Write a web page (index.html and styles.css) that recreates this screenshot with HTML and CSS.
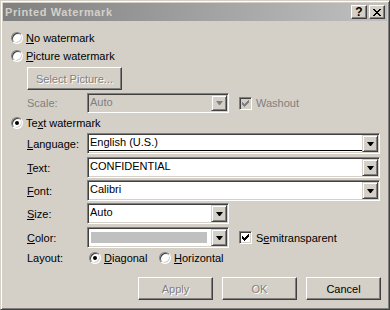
FILE: index.html
```html
<!DOCTYPE html>
<html lang="en">
  <head>
    <meta charset="UTF-8" />
    <title>Printed Watermark</title>
    <link rel="stylesheet" href="styles.css">
  </head>
  <body>
    <div class="window">
      <div class="titlebar">
        <span class="title">Printed Watermark</span>
        <div class="cap-btns">
          <span class="cap-btn">?</span>
          <span class="cap-btn">
            <svg width="8" height="7" viewBox="0 0 8 7" shape-rendering="crispEdges">
              <path d="M0 0h2v1h-2zM6 0h2v1h-2zM1 1h2v1h-2zM5 1h2v1h-2zM2 2h4v1h-4zM3 3h2v1h-2zM2 4h4v1h-4zM1 5h2v1h-2zM5 5h2v1h-2zM0 6h2v1h-2zM6 6h2v1h-2z" fill="#000"/>
            </svg>
          </span>
        </div>
      </div>

      <div class="content">
        <div class="radio-row row-none">
          <span class="radio"></span><span><u>N</u>o watermark</span>
        </div>
        <div class="radio-row row-picture">
          <span class="radio"></span><span><u>P</u>icture watermark</span>
        </div>

        <div class="sub">
          <button class="btn select-btn" disabled>Select Picture...</button>

          <div class="field row-scale">
            <span class="label grey">Scale:</span>
            <div class="combo short off">
              <span class="combo-text">Auto</span><span class="drop"></span>
            </div>
            <span class="check off">
              <svg width="7" height="7" viewBox="0 0 7 7" shape-rendering="crispEdges"><path d="M6 0h1v3h-1zM5 1h1v3h-1zM4 2h1v3h-1zM3 3h1v3h-1zM2 4h1v3h-1zM1 3h1v3h-1zM0 2h1v3h-1z"/></svg>
            </span>
            <span class="grey">Washout</span>
          </div>
        </div>

        <div class="radio-row row-text">
          <span class="radio on"></span><span>Te<u>x</u>t watermark</span>
        </div>

        <div class="sub">
          <div class="field row-lang">
            <span class="label"><u>L</u>anguage:</span>
            <div class="combo long">
              <span class="combo-text focus">English (U.S.)</span><span class="drop"></span>
            </div>
          </div>
          <div class="field row-txt">
            <span class="label"><u>T</u>ext:</span>
            <div class="combo long">
              <span class="combo-text">CONFIDENTIAL</span><span class="drop"></span>
            </div>
          </div>
          <div class="field row-font">
            <span class="label"><u>F</u>ont:</span>
            <div class="combo long">
              <span class="combo-text">Calibri</span><span class="drop"></span>
            </div>
          </div>
          <div class="field row-size">
            <span class="label"><u>S</u>ize:</span>
            <div class="combo short">
              <span class="combo-text">Auto</span><span class="drop"></span>
            </div>
          </div>
          <div class="field row-color">
            <span class="label"><u>C</u>olor:</span>
            <div class="combo short">
              <span class="swatch"></span><span class="drop"></span>
            </div>
            <span class="check">
              <svg width="7" height="7" viewBox="0 0 7 7" shape-rendering="crispEdges"><path d="M6 0h1v3h-1zM5 1h1v3h-1zM4 2h1v3h-1zM3 3h1v3h-1zM2 4h1v3h-1zM1 3h1v3h-1zM0 2h1v3h-1z"/></svg>
            </span>
            <span>S<u>e</u>mitransparent</span>
          </div>
          <div class="field row-layout">
            <span class="label layout-label">Layout:</span>
            <span class="option first"><span class="radio on"></span><span><u>D</u>iagonal</span></span>
            <span class="option"><span class="radio"></span><span><u>H</u>orizontal</span></span>
          </div>
        </div>

        <div class="buttons">
          <button class="btn" disabled>Apply</button>
          <button class="btn" disabled>OK</button>
          <button class="btn">Cancel</button>
        </div>
      </div>
    </div>
  </body>
</html>
```

FILE: styles.css
```css
body {
  margin: 0;
  background: #d4d0c8;
}
.window {
  width: 390px;
  height: 310px;
  box-sizing: border-box;
  padding: 2px;
  background: #d4d0c8;
  border: 1px solid;
  border-color: #d4d0c8 #404040 #404040 #d4d0c8;
  box-shadow: inset 1px 1px #fff, inset -1px -1px #808080;
  font: 11px "Liberation Sans", Arial, sans-serif;
  color: #000;
}
.titlebar {
  height: 18px;
  display: flex;
  align-items: center;
  justify-content: space-between;
  padding: 0 2px;
  background: linear-gradient(to right, #808080, #c0c0c0);
}
.title {
  color: #d4d0c8;
  font-weight: bold;
  letter-spacing: 0.6px;
}
.cap-btns {
  display: flex;
  gap: 2px;
}
.cap-btn {
  width: 16px;
  height: 14px;
  box-sizing: border-box;
  display: flex;
  align-items: center;
  justify-content: center;
  background: #d4d0c8;
  border: 1px solid;
  border-color: #fff #404040 #404040 #fff;
  box-shadow: inset -1px -1px #808080;
  font-weight: bold;
  font-size: 12px;
}
.content {
  padding: 0 6px 0 8px;
}
.radio-row {
  display: flex;
  align-items: center;
  gap: 3px;
  height: 15px;
}
.row-none { margin-top: 9px; }
.row-picture { margin-top: 3px; }
.row-text { margin-top: 2px; }

.radio {
  width: 12px;
  height: 12px;
  box-sizing: border-box;
  border-radius: 50%;
  border: 1px solid;
  border-color: #808080 #fff #fff #808080;
  box-shadow: inset 1px 1px #404040, inset -1px -1px #d4d0c8;
  background: #fff;
  display: flex;
  align-items: center;
  justify-content: center;
  flex: none;
}
.radio.on::after {
  content: "";
  width: 4px;
  height: 4px;
  border-radius: 50%;
  background: #000;
}
.sub {
  padding-left: 16px;
}
.btn {
  width: 75px;
  height: 23px;
  box-sizing: border-box;
  padding: 0;
  background: #d4d0c8;
  border: 1px solid;
  border-color: #fff #404040 #404040 #fff;
  box-shadow: inset -1px -1px #808080;
  font: inherit;
  color: #000;
}
.btn:disabled {
  color: #808080;
  text-shadow: 1px 1px #fff;
}
.select-btn {
  display: block;
  width: 95px;
  margin-top: 4px;
}
.field {
  display: flex;
  align-items: center;
  height: 21px;
}
.row-scale { margin-top: 3px; height: 20px; }
.row-lang { margin-top: 3px; }
.row-txt { margin-top: 3px; }
.row-font { margin-top: 2px; }
.row-size { margin-top: 2px; }
.row-color { margin-top: 3px; }
.row-layout { margin-top: 2px; height: 15px; }

.label {
  width: 60px;
  flex: none;
}
.layout-label {
  width: 62px;
}
.grey {
  color: #808080;
}
.combo {
  height: 100%;
  box-sizing: border-box;
  display: flex;
  background: #fff;
  border: 1px solid;
  border-color: #808080 #fff #fff #808080;
  box-shadow: inset 1px 1px #404040, inset -1px -1px #d4d0c8;
  padding: 1px;
}
.combo.long { width: 293px; }
.combo.short { width: 142px; }
.combo.off {
  background: #d4d0c8;
  color: #808080;
}
.combo-text {
  flex: 1;
  padding-left: 1px;
  line-height: 15px;
  white-space: nowrap;
}
.combo-text.focus {
  border-bottom: 1px solid #000;
  margin-bottom: 1px;
}
.swatch {
  flex: 1;
  margin: 3px 4px 3px 2px;
  background: #c0c0c0;
}
.drop {
  width: 16px;
  flex: none;
  box-sizing: border-box;
  display: flex;
  align-items: center;
  justify-content: center;
  background: #d4d0c8;
  border: 1px solid;
  border-color: #d4d0c8 #404040 #404040 #d4d0c8;
  box-shadow: inset 1px 1px #fff, inset -1px -1px #808080;
}
.drop::after {
  content: "";
  width: 1px;
  height: 0;
  border-left: 3px solid transparent;
  border-right: 3px solid transparent;
  border-top: 4px solid #000;
}
.combo.off .drop::after {
  border-top-color: #808080;
}
.check {
  width: 13px;
  height: 13px;
  box-sizing: border-box;
  flex: none;
  margin: 0 4px 0 10px;
  display: flex;
  align-items: center;
  justify-content: center;
  background: #fff;
  border: 1px solid;
  border-color: #808080 #fff #fff #808080;
  box-shadow: inset 1px 1px #404040, inset -1px -1px #d4d0c8;
}
.check svg { fill: #000; }
.check.off { background: #d4d0c8; }
.check.off svg { fill: #808080; }

.option {
  display: flex;
  align-items: center;
  gap: 3px;
}
.option.first {
  width: 70px;
}
.buttons {
  display: flex;
  justify-content: flex-end;
  gap: 9px;
  margin-top: 12px;
}
```
